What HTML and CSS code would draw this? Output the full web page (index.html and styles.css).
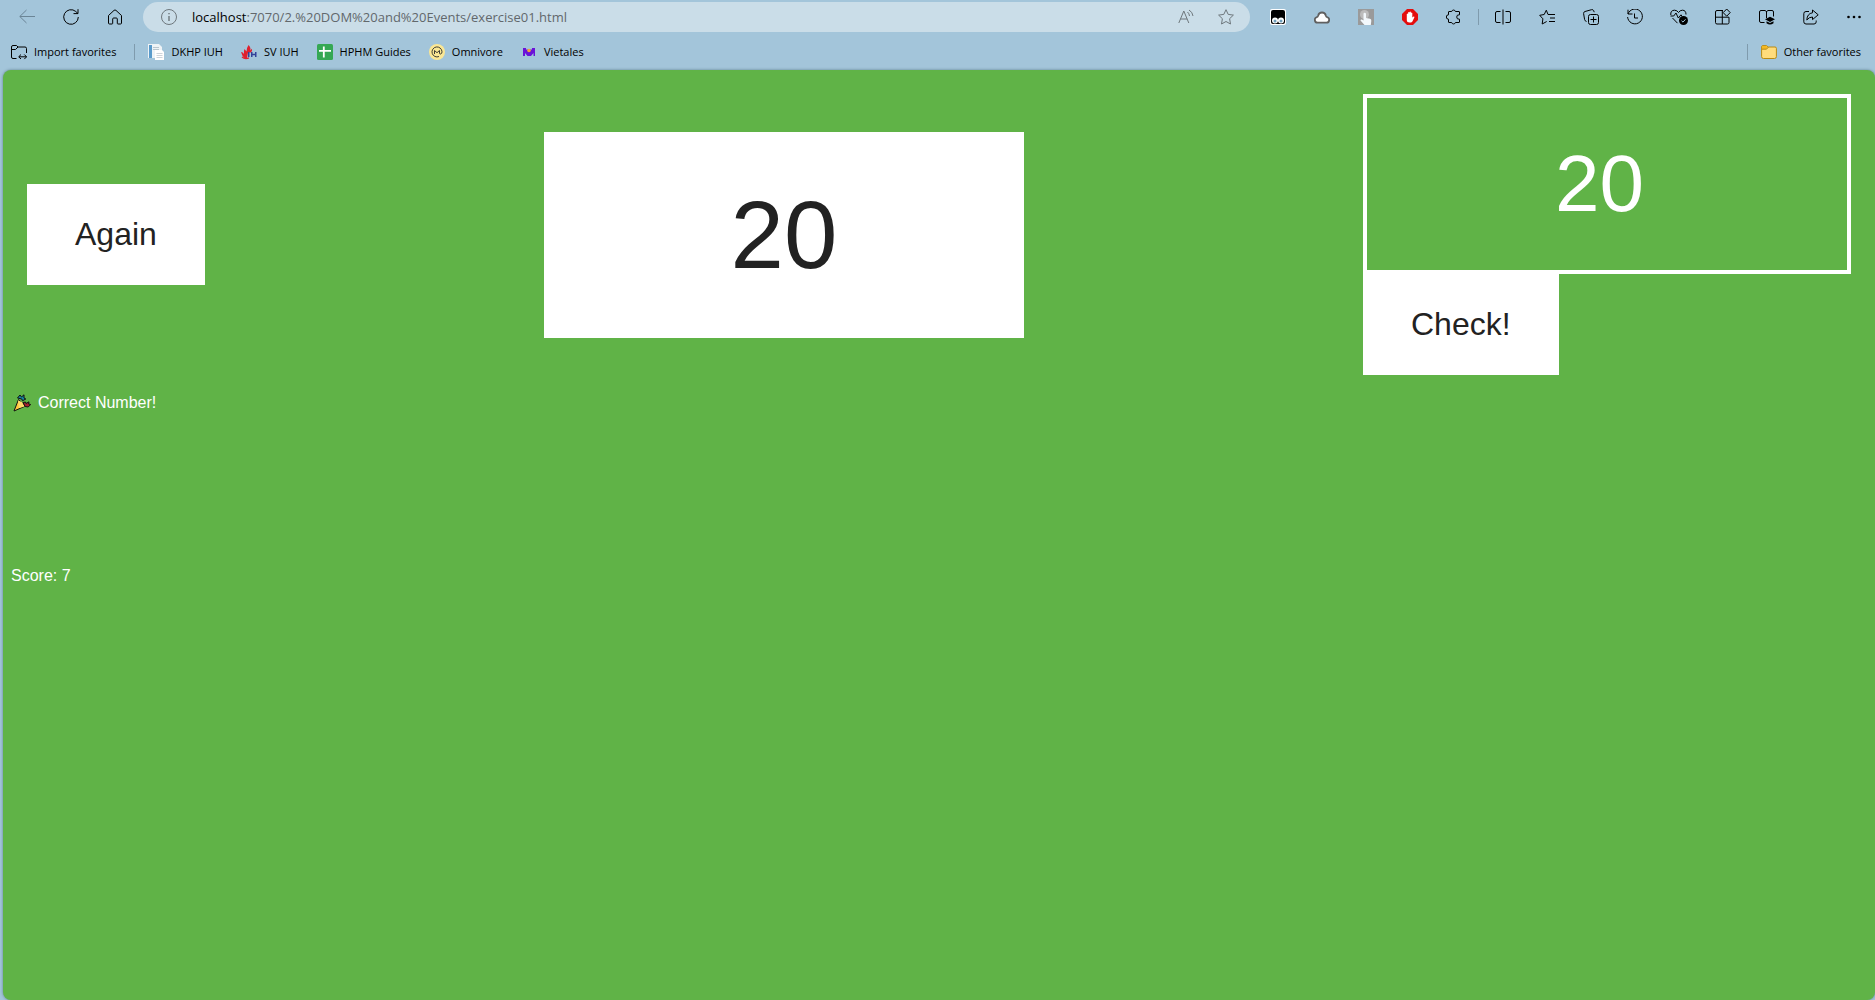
FILE: index.html
```html
<!DOCTYPE html>
<html lang="en">
<head>
<meta charset="utf-8">
<title>exercise01.html</title>
<link rel="stylesheet" href="styles.css">
</head>
<body>
<header class="chrome">
  <div class="toolbar">
    <button class="tool tool-muted" aria-label="Back"><svg class="icon" viewBox="0 0 16 16"><path d="M16 7.500H.8M7.500 1 .8 7.500l6.700 6.500"/></svg></button>
    <button class="tool" aria-label="Refresh"><svg class="icon" viewBox="0 0 16 16"><path d="M15.300 8A7.300 7.300 0 1 1 12.800 2.500L15 4.600M15 .2v4.400h-4.500"/></svg></button>
    <button class="tool" aria-label="Home"><svg class="icon" viewBox="0 0 16 16"><path d="M1.500 6.500 7 1.400q1-.9 2 0l5.500 5.100V14q0 1-1 1H11q-.7 0-.7-.7V10q0-1-1-1H6.700q-1 0-1 1v4.300q0 .7-.7.7H2.500q-1 0-1-1z"/></svg></button>
    <div class="address">
      <svg class="icon icon-gray" viewBox="0 0 16 16"><circle cx="8" cy="8" r="7.500"/><path d="M8 7v5M8 4v1.300" stroke-width="1.400"/></svg>
      <div class="url"><span class="host">localhost</span>:7070/2.%20DOM%20and%20Events/exercise01.html</div>
      <button class="address-tool" aria-label="Read aloud"><svg class="icon icon-gray" viewBox="0 0 16 16"><path d="M.8 14 5.800 2l5 12M2.500 10h6.600M9.500 3q1.800 1.500 2 4M11 1q3.500 2 4 6"/></svg></button>
      <button class="address-tool" aria-label="Add to favorites"><svg class="icon icon-gray" viewBox="0 0 16 16"><path d="m8 .7 2.200 4.700 5.200.7-3.800 3.600.9 5.300L8 12.500 3.500 15l.9-5.300L.6 6.100l5.200-.7z"/></svg></button>
    </div>
    <div class="tools">
      <button class="tool" aria-label="Tampermonkey"><svg class="icon art" viewBox="0 0 16 16"><rect width="16" height="16" rx="2" fill="#fff"/><rect x="1" y="1" width="14" height="14" rx="2" fill="#000"/><circle cx="5" cy="11.500" r="3" fill="#fff"/><circle cx="11" cy="11.500" r="3" fill="#fff"/><circle cx="5" cy="12" r="1.500" fill="#6fa0bd"/><circle cx="11" cy="12" r="1.500" fill="#6fa0bd"/></svg></button>
      <button class="tool" aria-label="Cloud"><svg class="icon art" viewBox="0 0 16 16"><path d="M3.500 13.700a2.800 2.800 0 0 1-.6-5.500Q3.800 8 4.200 6.500a3.900 3.900 0 0 1 7.600 0q.4 1.500 1.300 1.700a2.800 2.800 0 0 1-.6 5.500z" fill="#fff" stroke="#606060" stroke-width="1.800"/></svg></button>
      <button class="tool" aria-label="Gestures"><svg class="icon art" viewBox="0 0 16 16"><rect width="16" height="16" fill="#9a9a9a"/><circle cx="6.500" cy="5.500" r="4.500" fill="#bcbcbc"/><path d="M5.500 5q0-1.200 1.200-1.200T8 5v4l4 .8q1.500.4 1.300 2L12.800 16H6.500L2.500 11.500q0-1.500 1.500-1l1.500 1z" fill="#f2f8fc"/></svg></button>
      <button class="tool" aria-label="AdBlock"><svg class="icon art" viewBox="0 0 16 16"><path d="M5 0h6l5 5v6l-5 5H5l-5-5V5z" fill="#e40d0d"/><path d="M4.800 9V5q.8-.9 1.300 0V3.500q.7-1 1.400 0V3q.8-1 1.400 0v1q.8-1 1.400 0v4.500l1.300-1q1-.2.800.7l-2 4.200q-.6 1.100-1.700 1.100H7.500q-2.700 0-2.700-2.500z" fill="#fff"/></svg></button>
      <button class="tool" aria-label="Extensions"><svg class="icon" viewBox="0 0 16 16"><path d="M3 2.500h2.700a1.900 1.900 0 0 1 3.700 0H13q.5 0 .5.500v2.800q-2.800-.3-2.800 2.200t2.800 2.200V13q0 .5-.5.500H9.400a1.900 1.900 0 0 1-3.700 0H3q-.5 0-.5-.5v-2.800a2.200 2.200 0 0 1 0-4.400V3q0-.5.500-.5z"/></svg></button>
      <span class="divider"></span>
      <button class="tool" aria-label="Split screen"><svg class="icon" viewBox="0 0 16 16"><path d="M5.500 2.500H2q-1.500 0-1.500 1.500v8q0 1.500 1.500 1.500h3.500M10.500 2.500H14q1.500 0 1.500 1.500v8q0 1.500-1.500 1.500h-3.500M8 .5v15"/></svg></button>
      <button class="tool" aria-label="Favorites"><svg class="icon" viewBox="0 0 16 16"><path d="M9 5.500H16M11 9h5M10 12.500h6M9 5.500 7.300 1.200 5.200 5.500.7 6.300l3.200 3.500L3.200 15l4.500-2.500"/></svg></button>
      <button class="tool" aria-label="Collections"><svg class="icon" viewBox="0 0 16 16"><rect x="5.500" y="5.500" width="10" height="10" rx="2"/><path d="M10.500 7.500v6M7.500 10.500h6M3.500 12.500Q1.800 12 1.600 10.500L.6 4.600Q.4 3 2 2.500L8.500.7q1.700-.4 2.200 1l.5 1.500"/></svg></button>
      <button class="tool" aria-label="History"><svg class="icon" viewBox="0 0 16 16"><path d="M1 5a7.400 7.400 0 1 1-.4 3M1 .7V5h4.500M7.500 4.500V9H11"/></svg></button>
      <button class="tool" aria-label="Performance"><svg class="icon icon-wide" viewBox="0 0 18 16"><path d="M.8 6Q.3 1.300 4.500 1.200q2.500 0 4 2.300 1.500-2.300 4-2.300Q16 1.300 16 5.500M.5 7h3.200L6 4l2.300 5L11 5.800l1 1.500M2.500 9l5 5.200"/><circle cx="13.500" cy="11.500" r="4.500" fill="#000" stroke="none"/><path d="m11.500 11.700 1.500 1.400 2.500-2.800" stroke="#a3c5da"/></svg></button>
      <button class="tool" aria-label="Apps"><svg class="icon" viewBox="0 0 16 16"><path d="M8 1.500H2q-1.500 0-1.500 1.500v10.500Q.5 15 2 15h10.500q1.500 0 1.500-1.500V8.200H.5M7.300 1.500V15M11.700 0l3.500 3.600-3.500 3.600L8.200 3.600z"/></svg></button>
      <button class="tool" aria-label="Immersive reader"><svg class="icon" viewBox="0 0 16 16"><path d="M5.500 13.500H2Q.5 13.500.5 12V3Q.5 1.500 2 1.500h4l1.500 1 1.500-1h4q1.500 0 1.500 1.500v4.500M7.500 2v7"/><path d="m6 10.300 5-2.600 5 2.600-5 2.600zM7.500 12.200l3.500 1.700 3.500-1.700v2q-3.500 2.600-7 0z" fill="#000" stroke="none"/></svg></button>
      <button class="tool" aria-label="Share"><svg class="icon" viewBox="0 0 16 16"><path d="M6 2.500H3Q.8 2.500.8 4.700v8.100Q.8 15 3 15h8q2.200 0 2.200-2.200V11.500M9.500 1l5.700 4.800-5.700 4.800V8Q6 8 3.800 11 4.200 4.500 9.500 3.800z"/></svg></button>
      <button class="tool tool-end" aria-label="Settings and more"><svg class="icon art" viewBox="0 0 16 16"><circle cx="2.500" cy="8" r="1.300"/><circle cx="8" cy="8" r="1.300"/><circle cx="13.500" cy="8" r="1.300"/></svg></button>
    </div>
  </div>
  <nav class="bookmarks" aria-label="Favorites bar">
    <a class="bookmark" href="#"><svg class="icon" viewBox="0 0 16 16"><path d="M5.500 14.500H2Q.5 14.500.5 13V3Q.5 1.500 2 1.500h3.500l1.500 1.500h7q1.500 0 1.500 1.500V9M.5 5.500h4L7 3M8 12.800h7.500M10 10.500l-2.300 2.300L10 15M13.300 10.500l2.300 2.300-2.300 2.300"/></svg>Import favorites</a>
    <span class="divider"></span>
    <a class="bookmark" href="#"><svg class="icon art" viewBox="0 0 16 16"><path d="M0 0h11l3 3v11H0z" fill="#eef3f6"/><path d="M1 1h3v13H1z" fill="#5a9bcb"/><path d="M5 3h6v1H5zM5 5h6v1H5z" fill="#b9c6ce"/><path d="M7 6h7l2 2v8H7z" fill="#fff"/><path d="M8.500 9h6v1h-6zM8.500 11h6v1h-6zM8.500 13h6v1h-6z" fill="#cdd4da"/></svg>DKHP IUH</a>
    <a class="bookmark" href="#"><svg class="icon art" viewBox="0 0 16 16"><path d="M7.500 1q3 3 1.500 5.500l2-1.700q.5 2-1 3.700H7L6 14H3.500Q1 12 0 8q2 0 3 2Q2.500 7 3.500 5l2 2.500Q5.500 4 7.500 1z" fill="#e0202e"/><path d="M7 8h1.500v5H7zM10 8h1.500v1.800h2.500V8h1.500v5H14v-1.800h-2.500V13H10z" fill="#31419a"/><path d="M1 13q3 2.500 7 .8" fill="none" stroke="#e0202e" stroke-width="1.300"/></svg>SV IUH</a>
    <a class="bookmark" href="#"><svg class="icon art" viewBox="0 0 16 16"><rect width="16" height="16" rx="1.500" fill="#35a853"/><path d="M2 6.800h12M6.800 2.500v11" stroke="#fff" stroke-width="1.800"/></svg>HPHM Guides</a>
    <a class="bookmark" href="#"><svg class="icon art" viewBox="0 0 16 16"><circle cx="8" cy="8" r="8" fill="#fbe794"/><path d="M5.500 10V6.500L8 8.700l2.500-2.200V9q0 1.200 1.200 1 1.300-.3 1.300-2.200a5 5 0 1 0-3 4.700" fill="none" stroke="#3d3d33"/></svg>Omnivore</a>
    <a class="bookmark" href="#"><svg class="icon art" viewBox="0 0 16 16"><path d="M2 4h12v8H2z" fill="#6a13d8"/><path d="m4 9 2.500 3H4zM10 12l2.500-3v3z" fill="#a3c5da"/><path d="M5 4h6v1.500H5z" fill="#a3c5da"/><circle cx="8" cy="6.500" r="1.800" fill="#f5a33b"/></svg>Vietales</a>
    <span class="spacer"></span>
    <span class="divider"></span>
    <a class="bookmark" href="#"><svg class="icon art" viewBox="0 0 16 16"><path d="M.6 3Q.6 1.600 2 1.600h3.500L7.200 3H14q1.400 0 1.400 1.400v8.200q0 1.900-1.900 1.900h-11q-1.900 0-1.900-1.900z" fill="#ffdc7c" stroke="#b98a12"/><path d="M1 3Q1 2 2 2h3.300l1.500 1.200L5.500 5H1z" fill="#f5b921"/><path d="M1 5.200h4.500L7.500 3" fill="none" stroke="#b98a12"/></svg>Other favorites</a>
  </nav>
</header>
<main class="page">
  <section class="game">
    <button class="btn">Again</button>
    <div class="number">20</div>
    <form class="guess-form">
      <input class="guess" type="number" value="20" aria-label="Guess">
      <button class="btn" type="button">Check!</button>
    </form>
  </section>
  <section class="status">
    <p class="message"><svg class="party" viewBox="0 0 18 18"><path d="M5.500 5.500 12.500 12 1 17z" fill="#ffc83d" stroke="#111" stroke-linejoin="round"/><path d="M5 6.500 9 8l2.500 4.500L6 14z" fill="#ffd968"/><path d="m7 1 1.500 2L11 .8V4l1.800 1L9.500 6.800 8.800 5 4.500 4z" fill="#1686a0" stroke="#111"/><path d="M10 8.500 12.500 8l.5 1.500 3-1.700-.3 2.200 2 .5-2.500 2.500-3-.5z" fill="#a5202f" stroke="#111"/></svg>Correct Number!</p>
    <p class="score">Score: 7</p>
  </section>
</main>
</body>
</html>
```
FILE: styles.css
```css
* {
  box-sizing: border-box;
}

body {
  margin: 0;
  min-height: 100vh;
  display: flex;
  flex-direction: column;
  background: #a3c5da;
  color: #000;
  font-family: "Open Sans", "Noto Sans", sans-serif;
}

button {
  border: 0;
  padding: 0;
  background: none;
  color: inherit;
  font: inherit;
}

/* Browser toolbar */
.toolbar {
  display: flex;
  align-items: center;
  height: 34px;
  padding-left: 5px;
}

.tools {
  display: flex;
  align-items: center;
}

.tool,
.address-tool {
  display: flex;
  align-items: center;
  justify-content: center;
  height: 30px;
}

.tool {
  width: 44px;
}

.tool-end {
  width: 42px;
}

.address-tool {
  width: 40px;
}

.tool-muted {
  color: #6b8596;
}

.icon {
  flex: none;
  width: 16px;
  height: 16px;
  fill: none;
  stroke: currentColor;
}

.icon-wide {
  width: 18px;
}

.icon-gray {
  color: #6e777c;
}

.art {
  fill: #000;
  stroke: none;
}

.address {
  flex: 1;
  display: flex;
  align-items: center;
  height: 30px;
  margin: 0 6px;
  padding: 0 4px 0 18px;
  border-radius: 15px;
  background: #cadde8;
}

.url {
  flex: 1;
  margin-left: 15px;
  color: #62686c;
  font-size: 13px;
  line-height: 20px;
}

.host {
  color: #000;
}

.divider {
  width: 1px;
  height: 16px;
  background: #7f9bad;
}

.tools .divider {
  margin: 0 2px;
}

/* Favorites bar */
.bookmarks {
  display: flex;
  align-items: center;
  gap: 18px;
  height: 36px;
  padding: 0 14px 0 11px;
  font-size: 11px;
  line-height: 16px;
}

.bookmarks .divider {
  margin-right: -5px;
}

.bookmark {
  display: flex;
  align-items: center;
  gap: 7px;
  color: #000;
  text-decoration: none;
}

.spacer {
  flex: 1;
}

/* Game page */
.page {
  flex: 1;
  margin-left: 3px;
  border-radius: 8px;
  background: #60b347;
  box-shadow: 0 0 3px #5f7f8c;
  color: #fff;
  font-family: "Liberation Sans", Arial, sans-serif;
  font-size: 16px;
  line-height: 18px;
}

.game {
  display: flex;
  align-items: center;
  justify-content: space-between;
  padding: 24px 24px 19px;
}

.btn {
  padding: 32px 48px;
  background: #fff;
  color: #222;
  font-size: 32px;
  line-height: 37px;
}

.number {
  min-width: 480px;
  padding: 48px;
  background: #fff;
  color: #222;
  font-size: 96px;
  line-height: 110px;
  text-align: center;
}

.guess-form {
  display: flex;
  flex-direction: column;
  align-items: flex-start;
}

.guess {
  width: 488px;
  height: 180px;
  padding: 40px;
  border: 4px solid #fff;
  border-radius: 0;
  background: none;
  color: #fff;
  font-family: inherit;
  font-size: 80px;
  text-align: center;
}

.status {
  display: flex;
  flex-direction: column;
  gap: 155px;
  padding: 0 8px;
}

.message,
.score {
  margin: 0;
}

.message {
  display: flex;
  align-items: center;
  gap: 7px;
  padding-left: 2px;
}

.party {
  width: 18px;
  height: 18px;
}
```
